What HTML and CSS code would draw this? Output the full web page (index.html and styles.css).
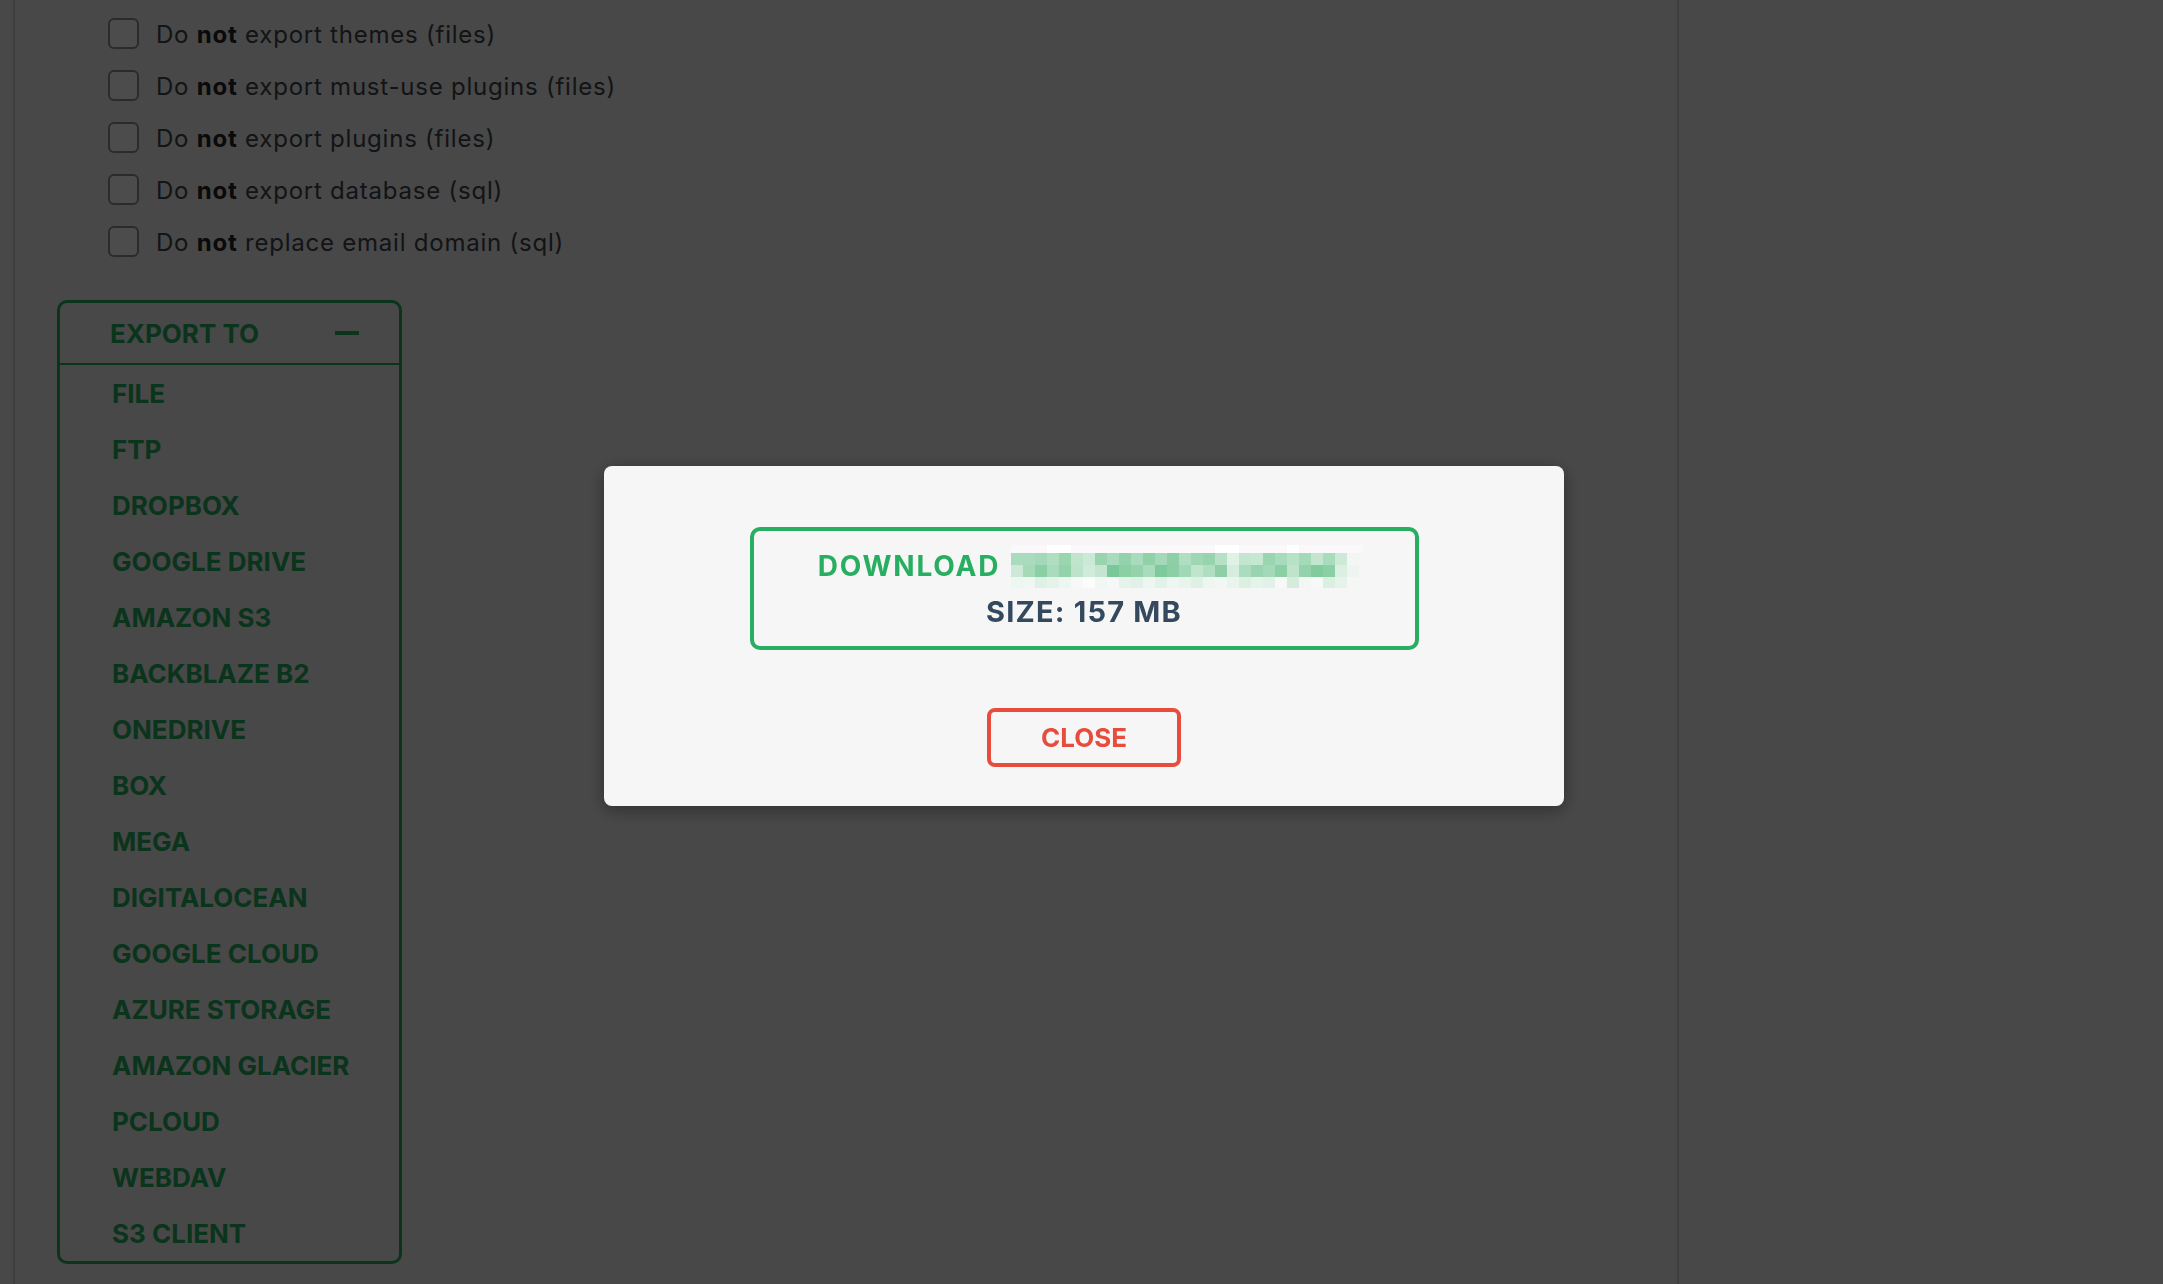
FILE: index.html
```html
<!DOCTYPE html>
<html lang="en">
<head>
<meta charset="utf-8">
<title>Export</title>
<link rel="stylesheet" href="styles.css">
</head>
<body>
<div class="page">
  <main class="content">
    <ul class="options">
      <li class="option"><span class="check"></span><span class="label">Do <b>not</b> export themes (files)</span></li>
      <li class="option"><span class="check"></span><span class="label">Do <b>not</b> export must-use plugins (files)</span></li>
      <li class="option"><span class="check"></span><span class="label">Do <b>not</b> export plugins (files)</span></li>
      <li class="option"><span class="check"></span><span class="label">Do <b>not</b> export database (sql)</span></li>
      <li class="option"><span class="check"></span><span class="label">Do <b>not</b> replace email domain (sql)</span></li>
    </ul>
    <section class="export">
      <div class="export-head"><span>EXPORT TO</span><span class="minus"></span></div>
      <ul class="export-list">
        <li>FILE</li>
        <li>FTP</li>
        <li>DROPBOX</li>
        <li>GOOGLE DRIVE</li>
        <li>AMAZON S3</li>
        <li>BACKBLAZE B2</li>
        <li>ONEDRIVE</li>
        <li>BOX</li>
        <li>MEGA</li>
        <li>DIGITALOCEAN</li>
        <li>GOOGLE CLOUD</li>
        <li>AZURE STORAGE</li>
        <li>AMAZON GLACIER</li>
        <li>PCLOUD</li>
        <li>WEBDAV</li>
        <li>S3 CLIENT</li>
      </ul>
    </section>
  </main>
</div>
<div class="overlay">
  <div class="modal">
    <div class="download">
      <div class="dl-row">
        <span class="dl-text">DOWNLOAD</span>
        <svg class="blur" width="352" height="43" viewBox="0 0 352 43" shape-rendering="crispEdges">
          <rect x="0" y="0" width="352" height="8" fill="#fbf8fb"/>
          <rect x="36" y="0" width="24" height="8" fill="#ffffff"/>
          <rect x="204" y="0" width="24" height="8" fill="#ffffff"/>
          <rect x="276" y="0" width="12" height="8" fill="#ffffff"/>
          <g>
            <rect x="0" y="8" width="12" height="12" fill="#a8dcbd"/>
            <rect x="12" y="8" width="12" height="12" fill="#a8dcbd"/>
            <rect x="24" y="8" width="12" height="12" fill="#a3d9b8"/>
            <rect x="36" y="8" width="12" height="12" fill="#b0dec1"/>
            <rect x="48" y="8" width="12" height="12" fill="#99d5af"/>
            <rect x="60" y="8" width="12" height="12" fill="#c0e5cd"/>
            <rect x="72" y="8" width="12" height="12" fill="#cbe9d6"/>
            <rect x="84" y="8" width="12" height="12" fill="#98d4ae"/>
            <rect x="96" y="8" width="12" height="12" fill="#a7dbbb"/>
            <rect x="108" y="8" width="12" height="12" fill="#93d2ab"/>
            <rect x="120" y="8" width="12" height="12" fill="#a8dcbd"/>
            <rect x="132" y="8" width="12" height="12" fill="#90d1a8"/>
            <rect x="144" y="8" width="12" height="12" fill="#a3d9b8"/>
            <rect x="156" y="8" width="12" height="12" fill="#8ecfa7"/>
            <rect x="168" y="8" width="12" height="12" fill="#b0dec1"/>
            <rect x="180" y="8" width="12" height="12" fill="#9fd7b4"/>
            <rect x="192" y="8" width="12" height="12" fill="#97d4ad"/>
            <rect x="204" y="8" width="12" height="12" fill="#b6e1c6"/>
            <rect x="216" y="8" width="12" height="12" fill="#e0f1e6"/>
            <rect x="228" y="8" width="12" height="12" fill="#c2e6cf"/>
            <rect x="240" y="8" width="12" height="12" fill="#c6e7d2"/>
            <rect x="252" y="8" width="12" height="12" fill="#99d5af"/>
            <rect x="264" y="8" width="12" height="12" fill="#a7dbbb"/>
            <rect x="276" y="8" width="12" height="12" fill="#b8e2c8"/>
            <rect x="288" y="8" width="12" height="12" fill="#a5dab9"/>
            <rect x="300" y="8" width="12" height="12" fill="#c4e6d0"/>
            <rect x="312" y="8" width="12" height="12" fill="#a8dcbd"/>
            <rect x="324" y="8" width="12" height="12" fill="#cfe9d8"/>
            <rect x="336" y="8" width="16" height="12" fill="#f4f6f5"/>
          </g>
          <g>
            <rect x="0" y="20" width="12" height="12" fill="#cbe9d6"/>
            <rect x="12" y="20" width="12" height="12" fill="#a5dab9"/>
            <rect x="24" y="20" width="12" height="12" fill="#8bcfa5"/>
            <rect x="36" y="20" width="12" height="12" fill="#a8dcbd"/>
            <rect x="48" y="20" width="12" height="12" fill="#93d2ab"/>
            <rect x="60" y="20" width="12" height="12" fill="#bde4cb"/>
            <rect x="72" y="20" width="12" height="12" fill="#d0eadb"/>
            <rect x="84" y="20" width="12" height="12" fill="#c4e6d0"/>
            <rect x="96" y="20" width="12" height="12" fill="#7ac899"/>
            <rect x="108" y="20" width="12" height="12" fill="#8ccfa5"/>
            <rect x="120" y="20" width="12" height="12" fill="#95d3ad"/>
            <rect x="132" y="20" width="12" height="12" fill="#a8dcbd"/>
            <rect x="144" y="20" width="12" height="12" fill="#7fca9c"/>
            <rect x="156" y="20" width="12" height="12" fill="#8ccfa5"/>
            <rect x="168" y="20" width="12" height="12" fill="#a1d8b6"/>
            <rect x="180" y="20" width="12" height="12" fill="#c0e5cd"/>
            <rect x="192" y="20" width="12" height="12" fill="#afdec0"/>
            <rect x="204" y="20" width="12" height="12" fill="#8ecfa7"/>
            <rect x="216" y="20" width="12" height="12" fill="#d6ecde"/>
            <rect x="228" y="20" width="12" height="12" fill="#aadcbd"/>
            <rect x="240" y="20" width="12" height="12" fill="#98d4ae"/>
            <rect x="252" y="20" width="12" height="12" fill="#a3d9b8"/>
            <rect x="264" y="20" width="12" height="12" fill="#8bcfa5"/>
            <rect x="276" y="20" width="12" height="12" fill="#bee4cc"/>
            <rect x="288" y="20" width="12" height="12" fill="#93d2ab"/>
            <rect x="300" y="20" width="12" height="12" fill="#82cb9e"/>
            <rect x="312" y="20" width="12" height="12" fill="#8bcfa5"/>
            <rect x="324" y="20" width="12" height="12" fill="#dcefe3"/>
            <rect x="336" y="20" width="12" height="12" fill="#eef5f0"/>
          </g>
          <g>
            <rect x="0" y="32" width="12" height="11" fill="#eef6f1"/>
            <rect x="12" y="32" width="12" height="11" fill="#f0f6f2"/>
            <rect x="24" y="32" width="12" height="11" fill="#e0f0e6"/>
            <rect x="36" y="32" width="12" height="11" fill="#e6f3eb"/>
            <rect x="48" y="32" width="12" height="11" fill="#eef6f1"/>
            <rect x="60" y="32" width="12" height="11" fill="#f7f9f8"/>
            <rect x="72" y="32" width="12" height="11" fill="#fdfcfd"/>
            <rect x="84" y="32" width="12" height="11" fill="#f1f7f3"/>
            <rect x="96" y="32" width="12" height="11" fill="#f5f8f6"/>
            <rect x="108" y="32" width="12" height="11" fill="#e6f3eb"/>
            <rect x="120" y="32" width="12" height="11" fill="#e2f1e8"/>
            <rect x="132" y="32" width="12" height="11" fill="#edf6f0"/>
            <rect x="144" y="32" width="12" height="11" fill="#e3f2e9"/>
            <rect x="156" y="32" width="12" height="11" fill="#eef6f1"/>
            <rect x="168" y="32" width="12" height="11" fill="#e9f4ed"/>
            <rect x="180" y="32" width="12" height="11" fill="#dff0e5"/>
            <rect x="192" y="32" width="12" height="11" fill="#eef6f1"/>
            <rect x="204" y="32" width="12" height="11" fill="#f1f7f3"/>
            <rect x="216" y="32" width="12" height="11" fill="#e9f4ed"/>
            <rect x="228" y="32" width="12" height="11" fill="#dcefe3"/>
            <rect x="240" y="32" width="12" height="11" fill="#e6f3eb"/>
            <rect x="252" y="32" width="12" height="11" fill="#e2f1e8"/>
            <rect x="264" y="32" width="12" height="11" fill="#f7f9f8"/>
            <rect x="276" y="32" width="12" height="11" fill="#d5ecdd"/>
            <rect x="288" y="32" width="12" height="11" fill="#f2f7f4"/>
            <rect x="300" y="32" width="12" height="11" fill="#f7f9f8"/>
            <rect x="312" y="32" width="12" height="11" fill="#dcefe3"/>
            <rect x="324" y="32" width="12" height="11" fill="#e6f3eb"/>
            <rect x="336" y="32" width="12" height="11" fill="#f6f6f6"/>
          </g>
        </svg>
      </div>
      <div class="size">SIZE: 157 MB</div>
    </div>
    <button class="close" type="button">CLOSE</button>
  </div>
</div>
</body>
</html>
```

FILE: styles.css
```css
* {
  box-sizing: border-box;
}

html,
body {
  margin: 0;
  padding: 0;
  height: 100%;
  overflow: hidden;
}

body {
  background: #f0f0f1;
  font-family: Inter, "Noto Sans", "Liberation Sans", sans-serif;
  color: #3c434a;
}

.page {
  margin-left: 13px;
  width: 1666px;
  height: 100vh;
  border-left: 2px solid #d2d3d5;
  border-right: 2px solid #d2d3d5;
}

.options {
  list-style: none;
  margin: 0;
  padding: 7px 0 0 93px;
}

.option {
  display: flex;
  align-items: center;
  gap: 17px;
  height: 52px;
}

.check {
  width: 31px;
  height: 31px;
  flex: none;
  border: 2px solid #8c8f94;
  border-radius: 6px;
  background: #ffffff;
}

.label {
  font-size: 24px;
  letter-spacing: 0.77px;
  color: #3c434a;
  padding-top: 2px;
}

.label b {
  font-weight: 700;
  color: #1d2327;
}

.export {
  margin: 33px 0 0 42px;
  width: 345px;
  border: 3px solid #27ae60;
  border-radius: 10px;
  color: #27ae60;
}

.export-head {
  height: 62px;
  display: flex;
  align-items: center;
  justify-content: space-between;
  padding: 0 40px 0 50px;
  border-bottom: 2px solid #27ae60;
  font-size: 26px;
  font-weight: 700;
}

.minus {
  width: 24px;
  height: 4px;
  background: #27ae60;
}

.export-list {
  list-style: none;
  margin: 0;
  padding: 0;
}

.export-list li {
  height: 56px;
  display: flex;
  align-items: center;
  padding-left: 52px;
  font-size: 26px;
  font-weight: 700;
}

.overlay {
  position: fixed;
  inset: 0;
  background: rgba(0, 0, 0, 0.7);
  display: flex;
  align-items: flex-start;
  justify-content: flex-start;
  padding: 466px 0 0 604px;
}

.modal {
  width: 960px;
  background: #f6f6f6;
  border-radius: 8px;
  padding: 61px 0 39px;
  display: flex;
  flex-direction: column;
  align-items: center;
  box-shadow: 0 4px 18px rgba(0, 0, 0, 0.35);
}

.download {
  width: 669px;
  border: 4px solid #27ae60;
  border-radius: 10px;
  padding: 12px 0;
}

.dl-row {
  height: 46px;
  display: flex;
  align-items: center;
  justify-content: center;
  gap: 11px;
  padding-left: 13px;
}

.dl-text {
  font-size: 28px;
  font-weight: 700;
  letter-spacing: 1.8px;
  color: #27ae60;
}

.blur {
  display: block;
  flex: none;
}

.size {
  height: 45px;
  line-height: 45px;
  text-align: center;
  font-size: 29px;
  font-weight: 700;
  letter-spacing: 1.2px;
  color: #34495e;
}

.close {
  margin-top: 58px;
  width: 194px;
  height: 59px;
  border: 4px solid #e74c3c;
  border-radius: 8px;
  background: transparent;
  color: #e74c3c;
  font-family: Inter, "Noto Sans", "Liberation Sans", sans-serif;
  font-size: 26px;
  font-weight: 700;
  padding: 0;
}
```
